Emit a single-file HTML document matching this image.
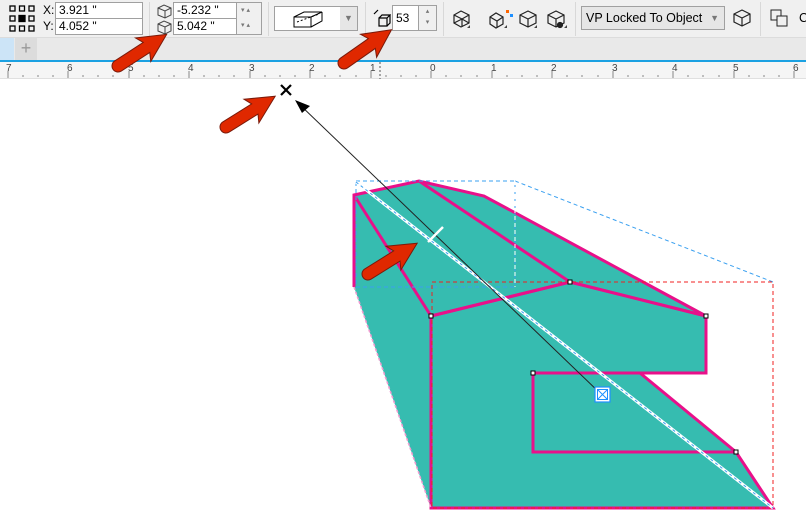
<!DOCTYPE html>
<html><head><meta charset="utf-8"><style>
*{margin:0;padding:0;box-sizing:border-box}
body{width:806px;height:527px;overflow:hidden;background:#fff;font-family:"Liberation Sans",sans-serif;font-size:12px;color:#000;position:relative}
.tb{position:absolute;left:0;top:0;width:806px;height:38px;background:#f0f0f0;border-bottom:1px solid #dcdcdc}
.a{position:absolute}
.inp{position:absolute;background:#fff;border:1px solid #a0a0a0;height:17px;font-size:12px;line-height:15px;padding-left:3px}
.sep{position:absolute;top:2px;width:1px;height:34px;background:#d8d8d8}
.tabs{position:absolute;left:0;top:38px;width:806px;height:22px;background:#e9e9e9}
.ruler{position:absolute;left:0;top:60px;width:806px;height:19px;background:#f5f5f5;border-top:2px solid #1ba1e2;border-bottom:1px solid #e0e0e0}
.rl{position:absolute;top:1px;font-size:10px;color:#444}
</style></head><body>
<div class="tb">
 <svg class="a" style="left:9px;top:5px" width="26" height="27" viewBox="0 0 26 27" fill="none" stroke="#000" stroke-width="1.3">
  <rect x="1" y="1" width="5" height="5"/><rect x="10.5" y="1" width="5" height="5"/><rect x="20" y="1" width="5" height="5"/>
  <rect x="1" y="11" width="5" height="5"/><rect x="20" y="11" width="5" height="5"/>
  <rect x="1" y="21" width="5" height="5"/><rect x="10.5" y="21" width="5" height="5"/><rect x="20" y="21" width="5" height="5"/>
  <rect x="10" y="10.5" width="6" height="6" fill="#000"/></svg>
 <div class="a" style="left:43px;top:3px">X:</div><div class="inp" style="left:55px;top:2px;width:88px">3.921 "</div>
 <div class="a" style="left:43px;top:19px">Y:</div><div class="inp" style="left:55px;top:18px;width:88px">4.052 "</div>
 <div class="sep" style="left:149px"></div>
 <svg class="a" style="left:156px;top:3px" width="18" height="32" viewBox="0 0 18 32" fill="none" stroke="#444" stroke-width="1">
  <path d="M2 5l6-3 7 3v7l-6 3-7-3z M2 5l7 3 6-3 M9 8v7"/><path d="M2 21l6-3 7 3v7l-6 3-7-3z M2 21l7 3 6-3 M9 24v7"/></svg>
 <div class="inp" style="left:173px;top:2px;width:64px">-5.232 "</div>
 <div class="inp" style="left:173px;top:18px;width:64px">5.042 "</div>
 <div class="a" style="left:236px;top:2px;width:26px;height:33px;border:1px solid #a0a0a0;background:#f0f0f0;font-size:7px;color:#777;line-height:15px;padding-left:4px">▾ ▴<br>▾ ▴</div>
 <div class="sep" style="left:268px"></div>
 <div class="a" style="left:274px;top:6px;width:84px;height:25px;border:1px solid #a0a0a0;background:#fff"></div>
 <div class="a" style="left:340px;top:7px;width:17px;height:23px;background:#e6e6e6;color:#777;font-size:9px;text-align:center;line-height:23px">▼</div>
 <svg class="a" style="left:292px;top:10px" width="32" height="18" viewBox="0 0 32 18" fill="none" stroke="#000" stroke-width="1"><path d="M2 7h17v10H2z M2 7l10-5h18l-11 5 M19 17l11-6V2"/><path d="M5 12l22-8" stroke-dasharray="2 2"/></svg>
 <div class="sep" style="left:365px"></div>
 <svg class="a" style="left:373px;top:8px" width="18" height="20" viewBox="0 0 18 20" fill="none" stroke="#000" stroke-width="1.2"><path d="M6 10h8v8H6z M6 10l3-3h8l-3 3 M17 7v8l-3 3 M1 6l4-4"/></svg>
 <div class="inp" style="left:392px;top:5px;width:27px;height:26px;line-height:24px">53</div>
 <div class="a" style="left:418px;top:5px;width:19px;height:26px;border:1px solid #a0a0a0;background:#f0f0f0;font-size:7px;color:#777;text-align:center;line-height:11px">▴<br>▾</div>
 <div class="sep" style="left:443px"></div>
 <svg class="a" style="left:450px;top:8px" width="120" height="22" viewBox="0 0 120 22" fill="none" stroke="#222" stroke-width="1.2">
  <path d="M4 7l7-4 8 4v8l-8 4-7-4z M4 7l8 4 7-4 M12 11v8 M4 15l8-4 7 4"/>
  <path d="M40 9l6-4 7 4v7l-7 4-6-4z M40 9l7 4 6-4 M47 13v7"/><rect x="56" y="2" width="3" height="3" fill="#f60" stroke="none"/><rect x="60" y="6" width="3" height="3" fill="#1e90ff" stroke="none"/>
  <path d="M70 7l8-4 8 4v8l-8 4-8-4z M70 7l8 4 8-4 M78 11v8"/>
  <path d="M98 7l8-4 8 4v8l-8 4-8-4z M98 7l8 4 8-4 M106 11v8"/><circle cx="110" cy="17" r="2.5" fill="#222"/>
  <path d="M20 20h-3l3-3z M57 20h-3l3-3z M87 20h-3l3-3z M117 20h-3l3-3z" fill="#444" stroke="none"/></svg>
 <div class="sep" style="left:575px"></div>
 <div class="a" style="left:581px;top:6px;width:144px;height:24px;border:1px solid #a0a0a0;background:#e6e6e6;padding-left:4px;line-height:22px;font-size:12.5px">VP Locked To Object<span style="position:absolute;right:5px;color:#777;font-size:9px">▼</span></div>
 <svg class="a" style="left:732px;top:8px" width="20" height="20" viewBox="0 0 20 20" fill="none" stroke="#222" stroke-width="1.2"><path d="M2 6l8-4 8 4v8l-8 4-8-4z M2 6l8 4 8-4 M10 10v8"/></svg>
 <div class="sep" style="left:760px"></div>
 <svg class="a" style="left:770px;top:9px" width="18" height="18" viewBox="0 0 18 18" fill="none" stroke="#222" stroke-width="1"><rect x="1" y="1" width="10" height="10"/><rect x="7" y="7" width="10" height="10" fill="#f0f0f0"/></svg>
 <div class="a" style="left:799px;top:11px;font-size:12.5px">C</div>
</div>
<div class="tabs"><div class="a" style="left:0;top:0;width:14px;height:22px;background:#cce4f7"></div><div class="a" style="left:15px;top:0;width:22px;height:22px;background:#dcdcdc;color:#999;font-size:18px;text-align:center;line-height:21px">+</div></div>
<div class="ruler">
 <svg class="a" style="left:0;top:0" width="806" height="17"><g stroke="#888" stroke-width="1">
 <path d="M8 9v7M68 9v7M129 9v7M189 9v7M250 9v7M310 9v7M371 9v7M431 9v7M492 9v7M552 9v7M613 9v7M673 9v7M734 9v7M794 9v7"/>
 <path d="M23 13v2M38 13v2M53 13v2M83 13v2M98 13v2M113 13v2M144 13v2M159 13v2M174 13v2M204 13v2M219 13v2M234 13v2M265 13v2M280 13v2M295 13v2M325 13v2M340 13v2M356 13v2M386 13v2M401 13v2M416 13v2M446 13v2M461 13v2M477 13v2M507 13v2M522 13v2M537 13v2M567 13v2M582 13v2M598 13v2M628 13v2M643 13v2M658 13v2M688 13v2M703 13v2M719 13v2M749 13v2M764 13v2M779 13v2"/>
 <path d="M380 0v17" stroke-dasharray="2 2" stroke="#555"/></g></svg>
 <span class="rl" style="left:6px">7</span><span class="rl" style="left:67px">6</span><span class="rl" style="left:128px">5</span><span class="rl" style="left:188px">4</span><span class="rl" style="left:249px">3</span><span class="rl" style="left:309px">2</span><span class="rl" style="left:370px">1</span><span class="rl" style="left:430px">0</span><span class="rl" style="left:491px">1</span><span class="rl" style="left:551px">2</span><span class="rl" style="left:612px">3</span><span class="rl" style="left:672px">4</span><span class="rl" style="left:733px">5</span><span class="rl" style="left:793px">6</span>
</div>
<svg class="a" style="left:0;top:0" width="806" height="527" viewBox="0 0 806 527">
 <defs><path id="arr" d="M0 -6 L34 -6 L30 -14 L58 0 L30 14 L34 6 L0 6 A6 6 0 0 1 0 -6Z"/></defs>
 <polygon points="354,195 419,180 484,196 706,316 706,373 640,373 736,452 773,508 431,508 354,287" fill="#36bcb0"/>
 <g fill="none" stroke="#e8108a" stroke-width="3" stroke-linejoin="miter">
  <polyline points="354,287 354,195 419,181 484,196 706,316"/>
  <polyline points="419,181 570,282 706,316"/>
  <polyline points="354,195 431,316 570,282"/>
  <polygon points="431,316 431,508 773,508 736,452 533,452 533,373 706,373 706,316 570,282"/>
  <line x1="640" y1="373" x2="736" y2="452"/>
 </g>
 <line x1="354" y1="287" x2="431" y2="508" stroke="#f29bd0" stroke-width="1.5" stroke-dasharray="3 2"/>
 <g fill="none" stroke-width="1" stroke-dasharray="4 3">
  <path d="M356 181H515V287H356Z M515 181L773 282" stroke="#3aa0f0"/>
  <path d="M515 181V287" stroke="#fff"/>
  <path d="M432 282H773V508H432Z" stroke="#f02020"/>
 </g>
 <line x1="356" y1="182" x2="773" y2="508" stroke="#fff" stroke-width="3"/>
 <line x1="356" y1="182" x2="773" y2="508" stroke="#3aa0f0" stroke-width="1" stroke-dasharray="3 3"/>
 <line x1="298" y1="103" x2="602" y2="395" stroke="#222" stroke-width="1"/>
 <polygon points="295,100 310,106 302,113" fill="#000"/>
 <path d="M281 85l10 10M291 85l-10 10" stroke="#000" stroke-width="2.2"/>
 <line x1="428" y1="242" x2="443" y2="227" stroke="#fff" stroke-width="2.5"/>
 <rect x="595" y="387" width="15" height="15" fill="#fff" stroke="#1e90ff" stroke-width="1.2"/>
 <rect x="597.5" y="389.5" width="10" height="10" fill="none" stroke="#1e90ff" stroke-width="1"/>
 <path d="M597.5 389.5l10 10M607.5 389.5l-10 10" stroke="#1e90ff" stroke-width="1"/>
 <g fill="#fff" stroke="#000" stroke-width="1"><rect x="568" y="280" width="4" height="4"/><rect x="704" y="314" width="4" height="4"/><rect x="531" y="371" width="4" height="4"/><rect x="734" y="450" width="4" height="4"/><rect x="429" y="314" width="4" height="4"/></g>
 <g fill="#e02800" stroke="#7a1a0a" stroke-width="1">
  <use href="#arr" transform="translate(118,66) rotate(-33)"/>
  <use href="#arr" transform="translate(344,63) rotate(-35)"/>
  <use href="#arr" transform="translate(226,127) rotate(-32)"/>
  <use href="#arr" transform="translate(368,274) rotate(-32)"/>
 </g>
</svg>
</body></html>
